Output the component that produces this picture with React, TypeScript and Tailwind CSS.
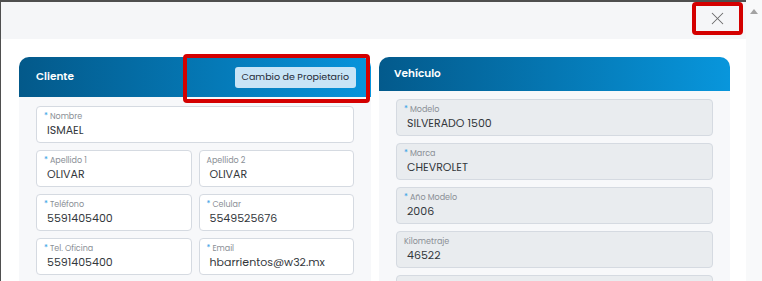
import { X } from 'lucide-react'

type FieldProps = {
  label: string
  value: string
  required?: boolean
  disabled?: boolean
  className?: string
}

function Field({ label, value, required, disabled, className = '' }: FieldProps) {
  return (
    <div
      className={`h-[37px] shrink-0 rounded-[4px] border border-[#d5dae1] px-[7px] pt-[5px] ${
        disabled ? 'bg-[#e9ecef]' : 'bg-white'
      } ${className}`}
    >
      <div className="flex h-[10px] items-start text-[8px] leading-[10px] text-[#8a8f96]">
        {required && <span className="mr-[2px] text-[#3ba3e6]">*</span>}
        <span>{label}</span>
      </div>
      <div className="pl-[3px] text-[11px] leading-[17px] text-[#33373c]">{value}</div>
    </div>
  )
}

export default function App() {
  return (
    <div className="flex h-[281px] w-[762px] overflow-hidden bg-white font-['Poppins','Inter',sans-serif]">
      <div className="flex w-[746px] flex-col border-l border-t-2 border-[#4f4f4f]">
        {/* modal header */}
        <div className="flex h-[37px] shrink-0 justify-end bg-[#f5f6f8] pr-[3px]">
          <div className="flex h-[33px] w-[51px] items-center justify-center rounded-[4px] border-4 border-[#d40000]">
            <X className="h-[21px] w-[21px] text-[#6a6a6a]" strokeWidth={1.2} />
          </div>
        </div>

        <div className="flex min-h-0 flex-1 gap-[8px] bg-white pl-[18px] pt-[18px]">
          {/* Cliente */}
          <div className="relative flex w-[352px] flex-col">
            <div className="flex h-[40px] shrink-0 items-center justify-between rounded-t-[10px] bg-gradient-to-r from-[#03598a] to-[#0794dc] pl-[17px] pr-[15px]">
              <span className="text-[10.5px] font-semibold text-white">Cliente</span>
              <button className="h-[21px] rounded-[3px] bg-[#c8e4f6] px-[7px] text-[9.5px] text-[#1f2a36]">
                Cambio de Propietario
              </button>
            </div>
            <div className="absolute left-[164px] top-[-3px] h-[49px] w-[187px] rounded-[4px] border-4 border-[#d40000]" />
            <div className="flex flex-1 flex-col gap-[7px] bg-[#f7f8fa] px-[17px] pt-[9px]">
              <Field label="Nombre" value="ISMAEL" required />
              <div className="grid grid-cols-2 gap-[7px]">
                <Field label="Apellido 1" value="OLIVAR" required />
                <Field label="Apellido 2" value="OLIVAR" />
              </div>
              <div className="grid grid-cols-2 gap-[7px]">
                <Field label="Teléfono" value="5591405400" required />
                <Field label="Celular" value="5549525676" required />
              </div>
              <div className="grid grid-cols-2 gap-[7px]">
                <Field label="Tel. Oficina" value="5591405400" required />
                <Field label="Email" value="hbarrientos@w32.mx" required />
              </div>
            </div>
          </div>

          {/* Vehículo */}
          <div className="flex w-[351px] flex-col">
            <div className="flex h-[34px] shrink-0 items-center rounded-t-[10px] bg-gradient-to-r from-[#035a8c] to-[#0896dc] pl-[15px]">
              <span className="text-[10.5px] font-semibold text-white">Vehículo</span>
            </div>
            <div className="flex flex-1 flex-col gap-[7px] bg-[#f7f8fa] px-[17px] pt-[8px]">
              <Field label="Modelo" value="SILVERADO 1500" required disabled />
              <Field label="Marca" value="CHEVROLET" required disabled />
              <Field label="Año Modelo" value="2006" required disabled />
              <Field label="Kilometraje" value="46522" disabled />
              <Field label="" value="" disabled />
            </div>
          </div>
        </div>
      </div>

      {/* scrollbar */}
      <div className="flex w-[16px] justify-center bg-[#f8f9fa] pt-[9px]">
        <div className="h-0 w-0 border-x-[4px] border-b-[5px] border-x-transparent border-b-[#a3a3a3]" />
      </div>
    </div>
  )
}
